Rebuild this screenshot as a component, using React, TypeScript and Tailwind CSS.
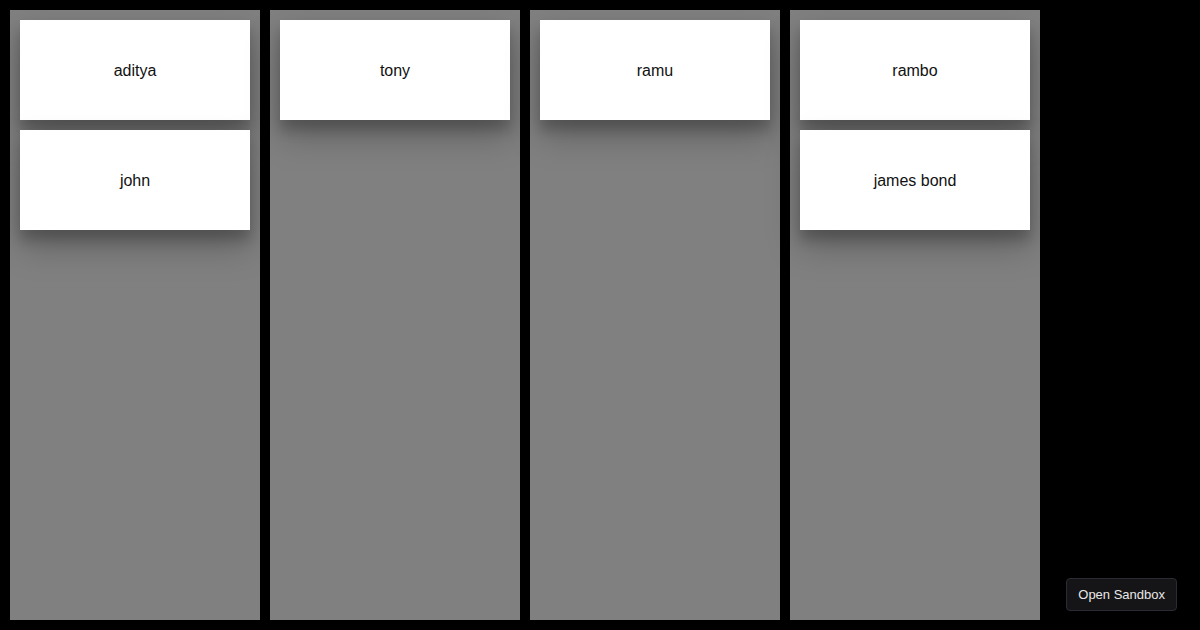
const columns = [
  ['aditya', 'john'],
  ['tony'],
  ['ramu'],
  ['rambo', 'james bond'],
];

function Card({ name }: { name: string }) {
  return (
    <div className="w-[230px] h-[100px] pt-[2px] bg-white flex items-center justify-center text-[16px] text-[#111] shadow-[0_16px_32px_rgba(0,0,0,0.25),0_10px_12px_rgba(0,0,0,0.2)]">
      {name}
    </div>
  );
}

export default function App() {
  return (
    <div className="relative w-[1200px] h-[630px] bg-black p-[10px] flex gap-[10px] font-['Liberation_Sans',Arial,sans-serif]">
      {columns.map((col, i) => (
        <div key={i} className="w-[250px] h-[610px] bg-[#808080] p-[10px] flex flex-col gap-[10px]">
          {col.map((name) => (
            <Card key={name} name={name} />
          ))}
        </div>
      ))}

      <button className="absolute right-[23px] bottom-[19px] h-[33px] px-[11px] rounded-[4px] bg-[#151417] border border-[#2c2b33] text-[#e8e8e8] text-[13px] font-['Liberation_Sans',Arial,sans-serif]">
        Open Sandbox
      </button>
    </div>
  );
}
